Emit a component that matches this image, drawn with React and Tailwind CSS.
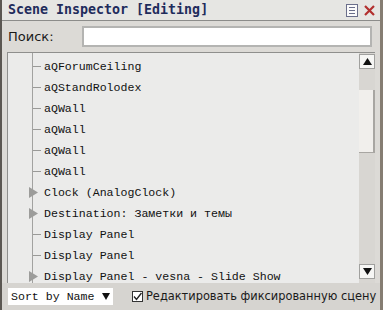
import { Fragment } from 'react';

const MONO = { fontFamily: '"Liberation Mono", "DejaVu Sans Mono", monospace' };
const TITLE = { fontFamily: '"DejaVu Sans Mono", "Liberation Mono", monospace' };
const SANS = { fontFamily: '"DejaVu Sans", "Noto Sans", sans-serif' };

const rows = [
  { name: 'aQForumCeiling' },
  { name: 'aQStandRolodex' },
  { name: 'aQWall' },
  { name: 'aQWall' },
  { name: 'aQWall' },
  { name: 'aQWall' },
  { name: 'Clock (AnalogClock)', group: true },
  { name: 'Destination: Заметки и темы', group: true },
  { name: 'Display Panel' },
  { name: 'Display Panel' },
  { name: 'Display Panel - vesna - Slide Show', group: true },
];

function Row({ row }) {
  return (
    <div className="relative flex h-[21px] shrink-0 items-center">
      {row.group ? (
        <svg width="9" height="11" viewBox="0 0 9 11" className="absolute left-[21px] top-[5px]">
          <path d="M0 0 L9 5.5 L0 11 Z" fill="#9c9c9a" />
        </svg>
      ) : (
        <div className="absolute left-[25px] top-[10px] h-px w-[8px] bg-[#9a9a98]" />
      )}
      <span className="pl-[36px] text-[11.6px] text-[#111] whitespace-nowrap" style={MONO}>
        {row.name}
      </span>
    </div>
  );
}

export default function App() {
  return (
    <div className="flex h-[310px] w-[383px] flex-col border-l-2 border-r-[3px] border-l-[#5b5752] border-r-[#857d72] bg-[#dcdad6]">
      {/* Title bar */}
      <div className="flex h-[21px] shrink-0 items-center justify-between border-b border-[#8c8c8a] bg-[#e6e6e3] pl-[6px] pr-[5px]">
        <span className="text-[13.3px] font-bold text-[#1f2c5c]" style={TITLE}>
          Scene Inspector [Editing]
        </span>
        <div className="flex items-center gap-[6px]">
          <svg width="12" height="13" viewBox="0 0 12 13">
            <rect x="0.5" y="0.5" width="11" height="12" fill="#fafafa" stroke="#6a6e8a" />
            <path d="M3 3.5 H9 M3 6.5 H9 M3 9.5 H9" stroke="#6a6e8a" strokeWidth="1" />
          </svg>
          <svg width="11" height="11" viewBox="0 0 11 11">
            <path d="M1 1 L10 10 M10 1 L1 10" stroke="#b2302f" strokeWidth="2.2" />
          </svg>
        </div>
      </div>

      {/* Search */}
      <div className="flex h-[31px] shrink-0 items-center pl-[6px] pr-[8px]">
        <span className="w-[74px] text-[13px] text-[#1a1a1a]" style={SANS}>
          Поиск:
        </span>
        <div className="h-[21px] flex-1 border-2 border-[#b4b4b2] bg-white" />
      </div>

      {/* List */}
      <div className="mx-[5px] flex h-[231px] shrink-0 border-l border-t border-[#8f8f8d] bg-[#ebebea]">
        <div className="relative flex flex-1 flex-col overflow-hidden pt-[3px]">
          <div className="absolute left-[24px] top-0 h-full w-px bg-[#a2a2a0]" />
          {rows.map((row, i) => (
            <Fragment key={i}>
              <Row row={row} />
            </Fragment>
          ))}
        </div>
        <div className="flex w-[16px] flex-col bg-[#d8d6d2] pt-px">
          <div className="flex h-[15px] items-center justify-center border border-[#a0a09e] bg-[#f6f6f4]">
            <svg width="9" height="7" viewBox="0 0 9 7">
              <path d="M4.5 0 L9 7 L0 7 Z" fill="#111" />
            </svg>
          </div>
          <div className="h-[21px]" />
          <div className="h-[63px] border-r-2 border-b border-[#a8a6a2] bg-[#f1efec]" />
          <div className="flex-1" />
          <div className="mb-[4px] flex h-[15px] items-center justify-center border border-[#a0a09e] bg-[#f6f6f4]">
            <svg width="9" height="7" viewBox="0 0 9 7">
              <path d="M0 0 L9 0 L4.5 7 Z" fill="#111" />
            </svg>
          </div>
        </div>
      </div>

      {/* Bottom */}
      <div className="flex flex-1 items-center bg-[#d6d4d0] pl-[6px]">
        <div className="flex h-[17px] w-[105px] items-center justify-between bg-white pl-[3px] pr-[3px]">
          <span className="text-[11.6px] text-[#111]" style={MONO}>
            Sort by Name
          </span>
          <svg width="8" height="7" viewBox="0 0 8 7">
            <path d="M0 0 L8 0 L4 7 Z" fill="#111" />
          </svg>
        </div>
        <div className="ml-[19px] flex h-[11px] w-[11px] items-center justify-center border border-[#333] bg-white">
          <svg width="9" height="9" viewBox="0 0 9 9">
            <path d="M1 4.5 L3.5 7.5 L8.5 1" stroke="#222" strokeWidth="1.4" fill="none" />
          </svg>
        </div>
        <span className="ml-[3px] text-[11.4px] text-[#1a1a1a] whitespace-nowrap" style={SANS}>
          Редактировать фиксированную сцену
        </span>
      </div>
    </div>
  );
}
